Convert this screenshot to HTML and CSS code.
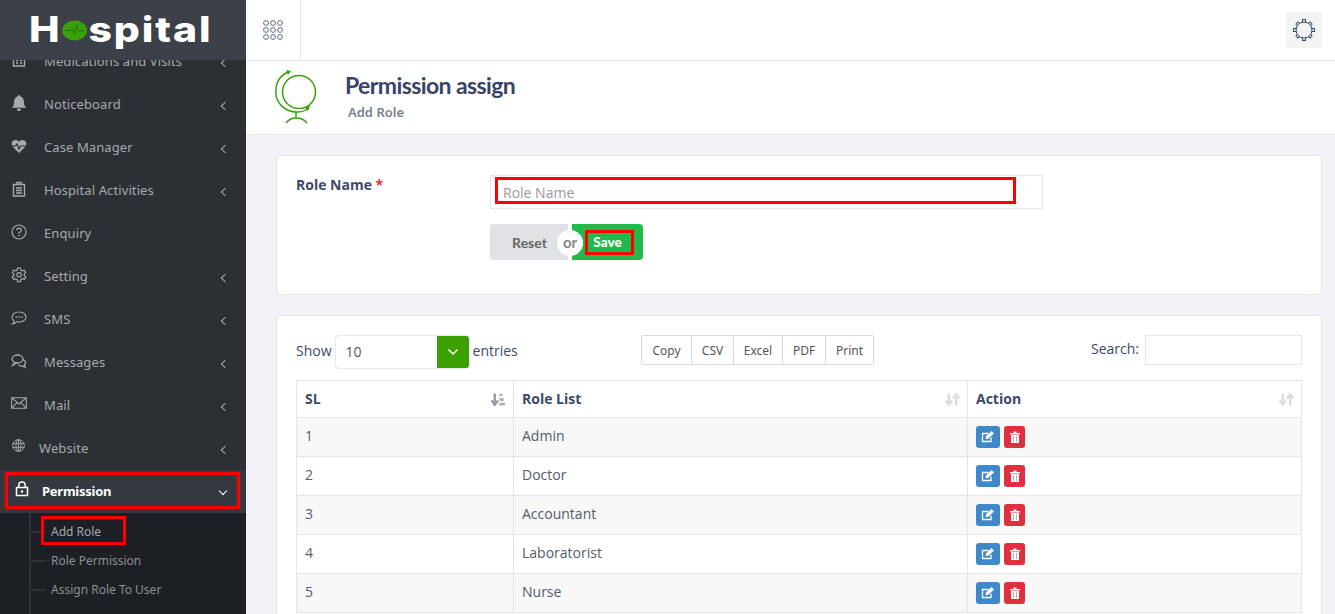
FILE: index.html
```html
<!DOCTYPE html>
<html lang="en">
<head>
<meta charset="utf-8">
<title>Permission assign</title>
<link rel="stylesheet" href="styles.css">
</head>
<body>
<div class="app">
  <aside class="sidebar">
    <div class="brand"><span class="logo">H<span class="logo-o"><svg viewBox="0 0 26 22" width="22" height="21" preserveAspectRatio="none"><ellipse cx="13" cy="11" rx="12.5" ry="10.500" fill="#3ba10a"/><path d="M3 11h6l2-2 2 6 2-10 2 7 1-1h5" fill="none" stroke="#2b6d0a" stroke-width="1"/></svg></span>spital</span></div>
    <nav class="menu">
      <a class="item first"><svg class="ic" viewBox="0 0 16 16"><path d="M2.500 3h11v11h-11zM2.500 6h11M5 8.500h2M9 8.500h2M5 11h2M9 11h2" fill="none" stroke="#a6aaae" stroke-width="1.400"/></svg><span class="label">Medications and Visits</span><i class="chev"></i></a>
      <a class="item"><svg class="ic" viewBox="1.500 1 13 14.500"><path d="M8 1a1.300 1.300 0 0 1 1.200 1.200C11.500 3 12.500 5 12.500 7.500c0 2.500.7 3.500 2 5H1.500c1.300-1.500 2-2.500 2-5C3.500 5 4.500 3 6.800 2.200A1.300 1.300 0 0 1 8 1zM6 13.500h4a2 2 0 0 1-4 0z" fill="#a6aaae"/></svg><span class="label">Noticeboard</span><i class="chev"></i></a>
      <a class="item"><svg class="ic" viewBox="0 0 16 16"><path d="M8 15 2 9C0 7 .2 3.800 2.400 2.600 4.500 1.500 6.800 2.200 8 4c1.200-1.800 3.500-2.500 5.600-1.400C15.800 3.800 16 7 14 9z" fill="#a6aaae"/><path d="M0 8h4.500l1.500-2 2 5 1.500-3h6.500" fill="none" stroke="#2c3035" stroke-width="1.200"/></svg><span class="label">Case Manager</span><i class="chev"></i></a>
      <a class="item"><svg class="ic" viewBox="0 0 16 16"><path d="M2.500 3.500h11V15h-11zM6 3.500V1.500h4v2" fill="none" stroke="#a6aaae" stroke-width="1.400"/><path d="M5 7h6M5 9.500h6M5 12h6" stroke="#a6aaae" stroke-width="1.400"/></svg><span class="label">Hospital Activities</span><i class="chev"></i></a>
      <a class="item"><svg class="ic" viewBox="0 0 16 16"><circle cx="8" cy="8" r="7" fill="none" stroke="#a6aaae" stroke-width="1.200"/><path d="M5.800 6.200A2.200 2.200 0 1 1 8 8.500v1.300" fill="none" stroke="#a6aaae" stroke-width="1.200"/><circle cx="8" cy="11.600" r=".8" fill="#a6aaae"/></svg><span class="label">Enquiry</span></a>
      <a class="item"><svg class="ic" viewBox="0 0 16 16"><path d="M6.600 1h2.800l.4 2 1.600.9 1.900-.7 1.400 2.400-1.500 1.300v1.800l1.500 1.300-1.400 2.400-1.900-.7-1.600.9-.4 2H6.600l-.4-2-1.600-.9-1.900.7L1.300 10l1.500-1.300V6.900L1.300 5.600l1.400-2.400 1.900.7 1.600-.9z" fill="none" stroke="#a6aaae" stroke-width="1.200"/><circle cx="8" cy="7.800" r="2.200" fill="none" stroke="#a6aaae" stroke-width="1.200"/></svg><span class="label">Setting</span><i class="chev"></i></a>
      <a class="item"><svg class="ic" viewBox="0 0 16 16"><path d="M8 2c4 0 7 2.200 7 5s-3 5-7 5c-.9 0-1.700-.1-2.500-.3C4.500 13 3 14 1.500 14c.8-.8 1.300-1.800 1.400-3C1.700 10 1 8.600 1 7c0-2.800 3-5 7-5z" fill="none" stroke="#a6aaae" stroke-width="1.100"/><path d="M4.500 7h1.500M7.300 7h1.500M10 7h1.500" stroke="#a6aaae" stroke-width="1.500"/></svg><span class="label">SMS</span><i class="chev"></i></a>
      <a class="item"><svg class="ic" viewBox="0 0 16 16"><ellipse cx="6.500" cy="6" rx="5.500" ry="4" fill="none" stroke="#a6aaae" stroke-width="1.300"/><path d="M3 10 1.500 12.500 6 10M11.500 6.500c2 .6 3.200 1.900 3 3.500-.1 1-.7 1.600-1.300 2l1 2.500-3-1.500c-1.600.2-3-.3-3.700-1.500" fill="none" stroke="#a6aaae" stroke-width="1.300"/></svg><span class="label">Messages</span><i class="chev"></i></a>
      <a class="item"><svg class="ic mail" viewBox="0 0 16 12"><path d="M.7.700h14.600v10.600H.7zM.7.700 8 7l7.300-6.300M.7 11.300 6 5.500M15.300 11.300 10 5.500" fill="none" stroke="#a6aaae" stroke-width="1.100"/></svg><span class="label">Mail</span><i class="chev"></i></a>
      <a class="item web"><svg class="ic" viewBox="0 0 14 14"><circle cx="7" cy="7" r="6.300" fill="none" stroke="#a6aaae" stroke-width="1"/><ellipse cx="7" cy="7" rx="2.800" ry="6.300" fill="none" stroke="#a6aaae" stroke-width="1"/><path d="M.7 5h12.600M.7 9h12.600M7 .7v12.600" stroke="#a6aaae" stroke-width="1"/></svg><span class="label">Website</span><i class="chev"></i></a>
      <a class="item active"><svg class="ic" viewBox="0 0 14 16"><path d="M1.500 6.500h11v8h-11zM3.800 6.500V4.200a3.200 3.200 0 0 1 6.400 0v2.300" fill="none" stroke="#fff" stroke-width="1.500"/><circle cx="7" cy="10.500" r="1.200" fill="#fff"/></svg><span class="label">Permission</span><i class="chev down"></i><span class="mark mark-perm"></span></a>
      <div class="submenu">
        <a class="sub"><span class="sub-text">Add Role</span><span class="mark mark-add"></span></a>
        <a class="sub"><span class="sub-text">Role Permission</span></a>
        <a class="sub"><span class="sub-text">Assign Role To User</span></a>
      </div>
    </nav>
  </aside>
  <div class="main">
    <header class="topbar">
      <button class="apps" aria-label="Apps"><svg viewBox="0 0 22 22" width="22" height="22"><g fill="none" stroke="#5f6b85" stroke-width="1"><circle cx="4" cy="4" r="2.400"/><circle cx="11" cy="4" r="2.400"/><circle cx="18" cy="4" r="2.400"/><circle cx="4" cy="11" r="2.400"/><circle cx="11" cy="11" r="2.400"/><circle cx="18" cy="11" r="2.400"/><circle cx="4" cy="18" r="2.400"/><circle cx="11" cy="18" r="2.400"/><circle cx="18" cy="18" r="2.400"/></g></svg></button>
      <button class="gear" aria-label="Settings"><svg viewBox="0 0 24 24" width="24" height="24"><g fill="#f3f3f3" stroke="#3b4a6b" stroke-width="1"><rect x="10.500" y="1.500" width="3" height="3"/><rect x="10.500" y="19.500" width="3" height="3"/><rect x="1.500" y="10.500" width="3" height="3"/><rect x="19.500" y="10.500" width="3" height="3"/><rect x="4.500" y="4.500" width="3" height="3" transform="rotate(45 6 6)"/><rect x="16.500" y="4.500" width="3" height="3" transform="rotate(45 18 6)"/><rect x="4.500" y="16.500" width="3" height="3" transform="rotate(45 6 18)"/><rect x="16.500" y="16.500" width="3" height="3" transform="rotate(45 18 18)"/><circle cx="12" cy="12" r="8"/></g></svg></button>
    </header>
    <section class="page-head">
      <svg class="globe" viewBox="0 0 42 54" width="42" height="54"><g fill="none" stroke="#3ba10a" stroke-width="1.500"><circle cx="24" cy="22" r="16.500"/><path d="M13 2C4 6 .8 14 .8 22c0 11 9 20 21 20 4 0 8-1 11-3"/><path d="M21 42v6"/><path d="M11 53c3-4 7-5 10-5s8 1 11 5"/></g><path d="M11 0l5 1-3 4zM29 37l6-1-2 5z" fill="#3ba10a"/></svg>
      <div class="head-text">
        <h1>Permission assign</h1>
        <p>Add Role</p>
      </div>
    </section>
    <div class="content">
      <section class="card form-card">
        <div class="form-row">
          <label class="form-label">Role Name <span class="req">*</span></label>
          <div class="form-field">
            <div class="input-wrap"><input class="input" placeholder="Role Name"><span class="mark mark-input"></span></div>
            <div class="btn-group">
              <button class="btn-reset">Reset</button>
              <span class="or">or</span>
              <button class="btn-save">Save<span class="mark mark-save"></span></button>
            </div>
          </div>
        </div>
      </section>
      <section class="card table-card">
        <div class="tools">
          <div class="length">Show <span class="select"><span class="select-val">10</span><span class="select-btn"><svg viewBox="0 0 12 8" width="12" height="8"><path d="M1.500 1.500 6 6l4.500-4.500" fill="none" stroke="#fff" stroke-width="1.500"/></svg></span></span> entries</div>
          <div class="exports"><button>Copy</button><button>CSV</button><button>Excel</button><button>PDF</button><button>Print</button></div>
          <div class="search">Search: <span class="search-box"></span></div>
        </div>
        <table class="table">
          <thead>
            <tr>
              <th class="c1">SL<svg class="sort" viewBox="0 0 16 15" width="15" height="15"><path d="M4 1v11M.5 8.500 4 13l3.500-4.500" fill="none" stroke="#9a9ea5" stroke-width="2.600"/><path d="M9 1h3v3H9zM9 6h4.500v3H9zM9 11h6v3H9z" fill="#b0b3b8"/></svg></th>
              <th class="c2">Role List<svg class="sort" viewBox="0 0 16 15" width="15" height="15"><path d="M4 1v11M.5 8.500 4 13l3.500-4.500M12 14V3M8.500 6.500 12 2l3.500 4.500" fill="none" stroke="#dcdde0" stroke-width="2.600"/></svg></th>
              <th class="c3">Action<svg class="sort" viewBox="0 0 16 15" width="15" height="15"><path d="M4 1v11M.5 8.500 4 13l3.500-4.500M12 14V3M8.500 6.500 12 2l3.500 4.500" fill="none" stroke="#dcdde0" stroke-width="2.600"/></svg></th>
            </tr>
          </thead>
          <tbody>
            <tr class="odd"><td>1</td><td>Admin</td><td><span class="acts"><a class="act edit"><svg viewBox="0 0 14 12" width="14" height="12"><path d="M10 6.500V10.500H1.500V2.500H7.500" fill="none" stroke="#fff" stroke-width="1.300"/><path d="M4.500 8l.5-2.500L10.500 0 13 2.500 7 8z" fill="#fff"/></svg></a><a class="act del"><svg viewBox="0 0 10 12" width="10" height="12"><path d="M0 2h10v1.500H0zM3.500.5h3V2h-3zM1 4h8v8H1z" fill="#fff"/><path d="M3.500 5v6M6.500 5v6" stroke="#e8a0a8"/></svg></a></span></td></tr>
            <tr><td>2</td><td>Doctor</td><td><span class="acts"><a class="act edit"><svg viewBox="0 0 14 12" width="14" height="12"><path d="M10 6.500V10.500H1.500V2.500H7.500" fill="none" stroke="#fff" stroke-width="1.300"/><path d="M4.500 8l.5-2.500L10.500 0 13 2.500 7 8z" fill="#fff"/></svg></a><a class="act del"><svg viewBox="0 0 10 12" width="10" height="12"><path d="M0 2h10v1.500H0zM3.500.5h3V2h-3zM1 4h8v8H1z" fill="#fff"/><path d="M3.500 5v6M6.500 5v6" stroke="#e8a0a8"/></svg></a></span></td></tr>
            <tr class="odd"><td>3</td><td>Accountant</td><td><span class="acts"><a class="act edit"><svg viewBox="0 0 14 12" width="14" height="12"><path d="M10 6.500V10.500H1.500V2.500H7.500" fill="none" stroke="#fff" stroke-width="1.300"/><path d="M4.500 8l.5-2.500L10.500 0 13 2.500 7 8z" fill="#fff"/></svg></a><a class="act del"><svg viewBox="0 0 10 12" width="10" height="12"><path d="M0 2h10v1.500H0zM3.500.5h3V2h-3zM1 4h8v8H1z" fill="#fff"/><path d="M3.500 5v6M6.500 5v6" stroke="#e8a0a8"/></svg></a></span></td></tr>
            <tr><td>4</td><td>Laboratorist</td><td><span class="acts"><a class="act edit"><svg viewBox="0 0 14 12" width="14" height="12"><path d="M10 6.500V10.500H1.500V2.500H7.500" fill="none" stroke="#fff" stroke-width="1.300"/><path d="M4.500 8l.5-2.500L10.500 0 13 2.500 7 8z" fill="#fff"/></svg></a><a class="act del"><svg viewBox="0 0 10 12" width="10" height="12"><path d="M0 2h10v1.500H0zM3.500.5h3V2h-3zM1 4h8v8H1z" fill="#fff"/><path d="M3.500 5v6M6.500 5v6" stroke="#e8a0a8"/></svg></a></span></td></tr>
            <tr class="odd"><td>5</td><td>Nurse</td><td><span class="acts"><a class="act edit"><svg viewBox="0 0 14 12" width="14" height="12"><path d="M10 6.500V10.500H1.500V2.500H7.500" fill="none" stroke="#fff" stroke-width="1.300"/><path d="M4.500 8l.5-2.500L10.500 0 13 2.500 7 8z" fill="#fff"/></svg></a><a class="act del"><svg viewBox="0 0 10 12" width="10" height="12"><path d="M0 2h10v1.500H0zM3.500.5h3V2h-3zM1 4h8v8H1z" fill="#fff"/><path d="M3.500 5v6M6.500 5v6" stroke="#e8a0a8"/></svg></a></span></td></tr>
          </tbody>
        </table>
      </section>
    </div>
  </div>
</div>
</body>
</html>
```
FILE: styles.css
```css
* { box-sizing: border-box; }
html, body { margin: 0; height: 100%; overflow: hidden; }
body { font-family: "Open Sans", "Noto Sans", sans-serif; font-size: 14px; color: #3c4a68; background: #f1f3f8; }
button { font: inherit; }
.app { display: flex; width: 1335px; height: 614px; overflow: hidden; }

.sidebar { width: 246px; flex: none; display: flex; flex-direction: column; background: #2c3035; overflow: hidden; }
.brand { position: relative; z-index: 2; height: 60px; flex: none; background: #3c4149; display: flex; align-items: center; padding-left: 29px; }
.logo { font-family: Inter, sans-serif; font-weight: 800; font-size: 35px; line-height: 1; color: #fff; display: flex; align-items: center; letter-spacing: 1.600px; margin-top: -2px; transform: scaleX(1.17); transform-origin: left center; }
.logo-o { display: inline-flex; margin: 3px 1px 0 0; }
.menu { display: block; }
.item { position: relative; display: flex; align-items: center; height: 43px; padding-left: 11px; color: #a6aaae; font-family: "Noto Sans", sans-serif; font-size: 13px; letter-spacing: .1px; }
.item.first { margin-top: -21px; }
.ic { width: 16px; height: 16px; flex: none; margin-right: 17px; margin-top: -2px; }
.mail { height: 12px; margin-top: -4px; }
.label { flex: 1; }
.chev { width: 6px; height: 6px; border-left: 1.500px solid #a6aaae; border-bottom: 1.500px solid #a6aaae; transform: rotate(45deg); margin-right: 18px; margin-top: 5px; }
.chev.down { transform: rotate(-45deg); border-color: #fff; margin-right: 20px; margin-top: 0; width: 6px; height: 6px; }
.web .ic { width: 13px; height: 13px; margin-left: 1px; margin-right: 14px; margin-top: -4px; }
.active { margin-top: 1px; padding-bottom: 2px; background: #343841; color: #fff; font-weight: 700; padding-left: 15px; letter-spacing: -.25px; }
.active .ic { width: 14px; margin-right: 13px; margin-top: -3px; }
.submenu { background: #1c1f23; padding-top: 4px; height: 110px; position: relative; }
.submenu::before { content: ""; position: absolute; left: 29px; top: 0; bottom: 0; width: 2px; background: #2e3237; }
.sub { position: relative; display: flex; align-items: center; height: 29px; padding-left: 51px; color: #8d9196; font-family: "Noto Sans", sans-serif; font-size: 12px; }
.sub::before { content: ""; position: absolute; left: 31px; top: 14px; width: 15px; height: 2px; background: #2e3237; }
.sub:first-child { color: #a6aaae; }

.mark { position: absolute; border: 3px solid #f00; pointer-events: none; }
.mark-perm { left: 5px; top: 2px; width: 235px; height: 37px; }
.mark-add { left: 41px; top: -1px; width: 85px; height: 29px; }
.mark-input { left: 5px; top: 2px; width: 521px; height: 27px; }
.mark-save { left: 13px; top: 6px; width: 49px; height: 25px; }

.main { flex: 1; min-width: 0; display: flex; flex-direction: column; }
.topbar { height: 61px; flex: none; background: #fff; border-bottom: 1px solid #e4e7ee; display: flex; align-items: center; justify-content: space-between; padding-right: 13px; }
.apps { width: 55px; height: 60px; padding: 0; background: #fff; border: 0; border-right: 1px solid #e4e7ee; display: flex; align-items: center; justify-content: center; }
.gear { width: 36px; height: 36px; margin-top: -1px; background: #f3f3f3; border: 0; padding: 0; display: flex; align-items: center; justify-content: center; }
.page-head { height: 74px; flex: none; background: #fff; border-bottom: 1px solid #e2e5ec; display: flex; align-items: flex-start; padding: 9px 0 0 29px; }
.globe { flex: none; margin-right: 28px; }
.head-text { padding-top: 0; }
h1 { margin: 0; font-family: Lato, sans-serif; font-size: 23px; font-weight: 700; line-height: 30px; color: #374467; letter-spacing: -.6px; }
.head-text p { margin: 3px 0 0 3px; font-family: "Noto Sans", sans-serif; font-size: 13px; font-weight: 600; line-height: 18px; color: #7a7f88; }

.content { flex: 1; min-height: 0; padding: 20px 13px 0 30px; display: flex; flex-direction: column; gap: 20px; overflow: hidden; }
.card { background: #fff; border: 1px solid #e2e4ea; border-radius: 4px; flex: none; }
.form-card { height: 140px; padding: 19px 19px; }
.form-row { display: flex; }
.form-label { width: 194px; font-weight: 700; font-size: 14px; line-height: 20px; color: #3c4a68; }
.req { color: #e3342f; }
.input-wrap { position: relative; width: 553px; height: 34px; }
.input { display: block; width: 100%; height: 100%; border: 1px solid #e4e6ea; padding: 0 12px 0; font: 14px "Open Sans", sans-serif; outline: 0; background: #fff; }
.input::placeholder { color: #999; }
.btn-group { position: relative; display: flex; margin-top: 15px; width: 153px; height: 36px; }
.btn-reset { width: 78px; border: 0; background: #e0e2e5; border-radius: 4px 0 0 4px; color: #666; font: 700 14px Lato, sans-serif; padding: 0 0 0 1px; }
.btn-save { position: relative; width: 71px; margin-left: 4px; border: 0; background: #22b94a; border-radius: 0 4px 4px 0; color: #fff; font: 900 13.500px Lato, sans-serif; padding: 0; flex: none; }
.or { position: absolute; left: 67px; top: 6px; width: 26px; height: 26px; border-radius: 50%; background: #fff; color: #888; font: 700 15px/24px Lato, sans-serif; text-align: center; z-index: 1; }

.table-card { padding: 19px 19px 0; height: 400px; }
.tools { position: relative; display: flex; align-items: flex-start; height: 45px; }
.length { display: flex; align-items: center; width: 345px; font-size: 14px; line-height: 20px; gap: 3px; height: 34px; padding-bottom: 2px; }
.select { display: flex; width: 135px; height: 34px; border: 1px solid #e4e6ea; border-radius: 4px; overflow: hidden; margin-top: 2px; }
.select-val { flex: 1; padding-left: 10px; line-height: 32px; color: #555; font-size: 14px; }
.select-btn { width: 33px; background: #3ba100; display: flex; align-items: center; justify-content: center; margin: -1px -1px -1px 0; }
.exports { display: grid; grid-template-columns: 50px 42px 49px 43px 47px; height: 30px; border: 1px solid #d8dade; border-radius: 2px; overflow: hidden; }
.exports button { border: 0; border-right: 1px solid #d8dade; background: #fff; padding: 0; font-family: "Noto Sans", sans-serif; font-size: 12px; color: #555; height: 28px; }
.exports button:last-child { border-right: 0; }
.search { margin-left: auto; display: flex; align-items: center; gap: 6px; height: 30px; font-size: 14px; padding-bottom: 3px; }
.search-box { width: 157px; height: 30px; border: 1px solid #e4e6ea; margin-top: 3px; }

.table { width: 1006px; border-collapse: collapse; table-layout: fixed; }
.table th, .table td { border: 1px solid #e4e5e7; padding: 0 8px; text-align: left; }
.table th { position: relative; height: 37px; padding-bottom: 2px; font-size: 14px; font-weight: 700; color: #3c4a68; }
.table td { height: 39px; padding-bottom: 3px; font-size: 14px; color: #555b6b; }
.c1 { width: 217px; }
.c2 { width: 454px; }
.sort { position: absolute; right: 7px; top: 11px; }
.odd td { background: #f8f8f8; }
.acts { display: flex; gap: 4px; padding-top: 2px; }
.act { display: flex; align-items: center; justify-content: center; height: 22px; border-radius: 3px; }
.edit { width: 24px; background: #3f88c9; }
.del { width: 21px; background: #e02f3e; }
```
